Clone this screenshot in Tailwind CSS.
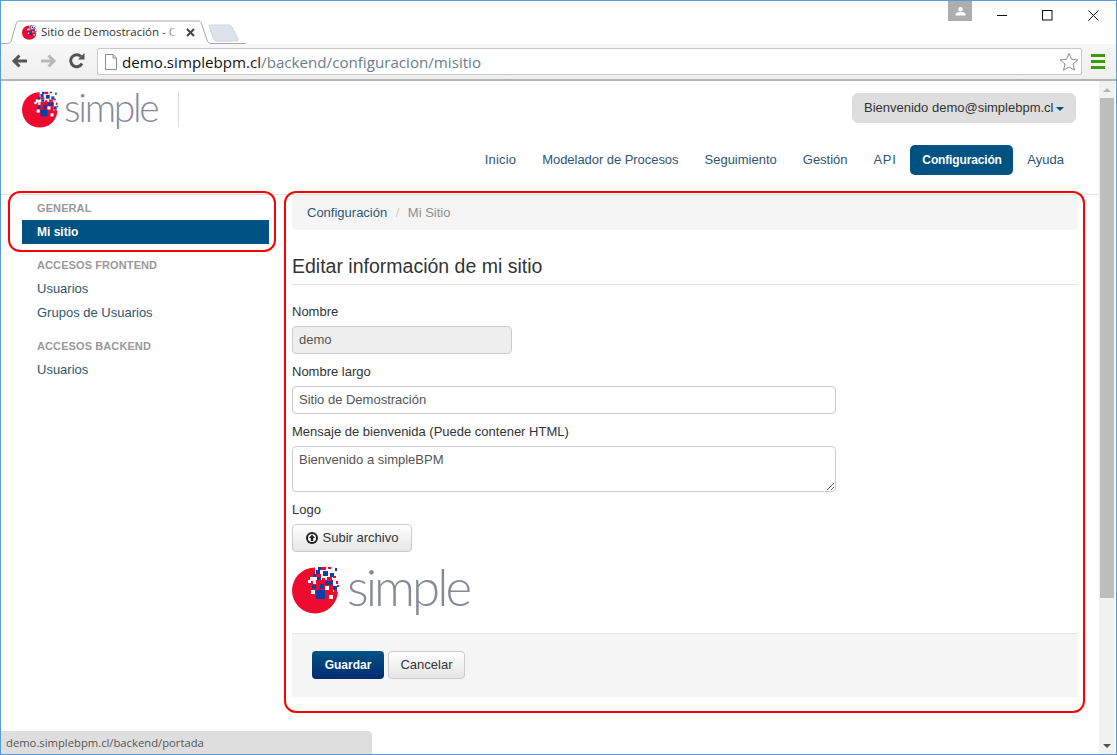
<!DOCTYPE html>
<html lang="es">
<head>
<meta charset="utf-8">
<title>Sitio de Demostración</title>
<script src="https://cdn.jsdelivr.net/npm/@tailwindcss/browser@4"></script>
</head>
<body class="bg-white">
<svg width="0" height="0" class="absolute">
  <defs>
    <symbol id="mark" viewBox="0 0 48 48">
      <circle cx="23" cy="24.500" r="23" fill="#ee0a2f"/>
      <rect x="23" y="0" width="25" height="14" fill="#fff"/>
      <rect x="41" y="14" width="7" height="12" fill="#fff"/>
      <g fill="#ee0a2f">
        <rect x="29" y="1" width="5" height="3"/><rect x="36" y="1" width="3" height="2"/><rect x="41" y="10" width="3" height="2"/><rect x="30" y="12" width="3" height="3"/><rect x="35" y="11" width="5" height="3"/><rect x="44" y="15" width="2" height="3"/><rect x="45" y="19" width="2" height="2"/><rect x="24" y="8" width="5" height="3"/><rect x="42" y="24" width="3" height="5"/>
      </g>
      <g fill="#fff">
        <rect x="18" y="11" width="6" height="4"/><rect x="16" y="14" width="3" height="3"/><rect x="19" y="24" width="4" height="4"/><rect x="37" y="29" width="4" height="4"/><rect x="33" y="20" width="4" height="4"/><rect x="21" y="15" width="3" height="3"/>
      </g>
      <g fill="#0a3fa8">
        <rect x="24" y="24" width="9" height="9"/><rect x="20" y="19" width="4" height="4"/><rect x="28" y="18" width="4" height="5"/><rect x="33" y="15" width="4" height="4"/><rect x="37" y="15" width="4" height="4"/><rect x="41" y="20" width="4" height="4"/><rect x="24" y="4" width="4" height="4"/><rect x="31" y="5" width="5" height="5"/><rect x="38" y="7" width="4" height="4"/><rect x="26" y="1" width="3" height="3"/><rect x="43" y="2" width="2" height="3"/><rect x="21" y="8" width="3" height="3"/><rect x="25" y="11" width="4" height="3"/>
      </g>
    </symbol>
  </defs>
</svg>

<div class="relative w-[1117px] h-[755px] overflow-hidden flex flex-col border border-[#5b9bd5] font-['Liberation_Sans',Arial,sans-serif]">

  <!-- title bar -->
  <div class="relative h-[43px] shrink-0 bg-white">
    <svg class="absolute left-0 top-0" width="245" height="43" viewBox="0 0 245 43">
      <path d="M0 42.500H6.500C9 42.500 10 41 10.500 39L15 23C15.500 21 16.500 20 19 20H197C199 20 200 21 200.600 23L206 39C206.600 41 208 42.500 210 42.500H245" fill="#fff" stroke="#a9a9a9"/>
      <path d="M208 25C207.600 24 208 24 209 24H227C229 24 230 25 231 26L237 38C237.500 39.500 237 40 236 40H216C214 40 213 39 212.500 38Z" fill="#dde3ea" stroke="#cfd5dc"/>
    </svg>
    <svg class="absolute left-[21px] top-[24px]" width="15" height="15"><use href="#mark"/></svg>
    <div class="absolute left-[40px] top-[22px] h-[18px] w-[137px] overflow-hidden whitespace-nowrap text-[11.500px] leading-[18px] text-[#333] font-['Open_Sans',sans-serif]">Sitio de Demostración - C</div>
    <div class="absolute left-[164px] top-[22px] w-[13px] h-[18px] bg-gradient-to-r from-white/0 to-white"></div>
    <svg class="absolute left-[185px] top-[27px]" width="9" height="9" viewBox="0 0 9 9"><path d="M1 1L8 8M8 1L1 8" stroke="#444" stroke-width="2"/></svg>

    <div class="absolute left-[947px] top-0 w-[24px] h-[20px] bg-[#aeaeae] flex items-center justify-center">
      <svg width="11" height="9" viewBox="0 0 11 9"><circle cx="5.500" cy="2.300" r="2.300" fill="#fff"/><path d="M0.500 8.500V7C0.500 5.800 3 5 5.500 5S10.500 5.800 10.500 7V8.500Z" fill="#fff"/></svg>
    </div>
    <svg class="absolute left-[996px] top-[9px]" width="11" height="11" viewBox="0 0 11 11"><path d="M0 5.500H10" stroke="#111"/></svg>
    <svg class="absolute left-[1041px] top-[9px]" width="11" height="11" viewBox="0 0 11 11"><rect x="0.500" y="0.500" width="9.500" height="9.500" fill="none" stroke="#111"/></svg>
    <svg class="absolute left-[1087px] top-[9px]" width="11" height="11" viewBox="0 0 11 11"><path d="M0.500 0.500L10.500 10.500M10.500 0.500L0.500 10.500" stroke="#111"/></svg>
  </div>

  <!-- toolbar -->
  <div class="h-[37px] shrink-0 flex items-center bg-gradient-to-b from-[#f7f7f7] to-[#efefef] border-b-2 border-[#b3b3b3]">
    <div class="w-[96px] shrink-0 relative h-[35px]">
      <svg class="absolute left-[10px] top-[9px]" width="17" height="16" viewBox="0 0 17 16"><path d="M16 8H4M8.500 2.500L3 8L8.500 13.500" fill="none" stroke="#555" stroke-width="3"/></svg>
      <svg class="absolute left-[39px] top-[9px]" width="17" height="16" viewBox="0 0 17 16"><path d="M1 8H13M8.500 2.500L14 8L8.500 13.500" fill="none" stroke="#b8b8b8" stroke-width="3"/></svg>
      <svg class="absolute left-[68px] top-[9px]" width="16" height="16" viewBox="0 0 16 16"><path d="M13 10.500A6 6 0 1 1 12 3.500" fill="none" stroke="#555" stroke-width="3"/><path d="M9 6.500H15.500V0Z" fill="#555"/></svg>
    </div>
    <div class="w-[985px] h-[27px] shrink-0 bg-white border border-[#c8c8c8] rounded-[2px] flex items-center pl-[7px] pr-[2px]">
      <svg class="shrink-0" width="12" height="16" viewBox="0 0 12 16"><path d="M0.500 0.500H8L11.500 4V15.500H0.500Z" fill="#fff" stroke="#8a8a8a"/><path d="M8 0.500V4H11.500" fill="none" stroke="#8a8a8a"/></svg>
      <div class="ml-[5px] flex-1 text-[15.150px] leading-[20px] whitespace-nowrap font-['Open_Sans',sans-serif] text-[#111]">demo.simplebpm.cl<span class="text-[#6d7d8b]">/backend/configuracion/misitio</span></div>
      <svg class="shrink-0" width="20" height="20" viewBox="0 0 20 20"><path d="M10 1.500L12.500 7.300L18.800 7.900L14 12L15.500 18.200L10 15L4.500 18.200L6 12L1.200 7.900L7.500 7.300Z" fill="#fff" stroke="#8c8c8c"/></svg>
    </div>
    <div class="ml-[9px] w-[14px] flex flex-col gap-[3px]">
      <div class="h-[3px] bg-[#3d9c00]"></div><div class="h-[3px] bg-[#3d9c00]"></div><div class="h-[3px] bg-[#3d9c00]"></div>
    </div>
  </div>

  <!-- viewport -->
  <div class="flex-1 flex min-h-0">
    <div class="w-[1098px] shrink-0 flex flex-col">
      <!-- site header -->
      <header class="h-[114px] shrink-0 border-b border-[#e3e3e3] pt-[9px]">
        <div class="flex justify-between items-start pl-[21px] pr-[23px] h-[38px]">
          <div class="flex items-center h-[38px]">
            <svg width="37" height="37"><use href="#mark"/></svg>
            <span class="ml-[5px] w-[95px] text-[39px] leading-[38px] -mt-[5px] font-light tracking-[-2.300px] whitespace-nowrap text-[#858a98] font-['Lato',sans-serif]">simple</span>
            <div class="ml-[19px] w-px h-[36px] bg-[#dcdcdc]"></div>
          </div>
          <div class="mt-[3px] h-[30px] w-[224px] bg-[#dedede] rounded-[6px] flex items-center pl-[12px] text-[13px] whitespace-nowrap text-[#333]">
            <span>Bienvenido demo@simplebpm.cl</span>
            <span class="ml-[2px] mt-[1px] w-0 h-0 border-x-[4px] border-t-[4px] border-x-transparent border-t-[#005282]"></span>
          </div>
        </div>
        <nav class="mt-[17px] flex justify-end gap-[2px] pr-[23px] text-[13px] text-[#2f5573]">
          <a class="h-[30px] px-[12px] flex items-center tracking-[0.200px]">Inicio</a>
          <a class="h-[30px] px-[12px] flex items-center tracking-[-0.050px]">Modelador de Procesos</a>
          <a class="h-[30px] px-[12px] flex items-center">Seguimiento</a>
          <a class="h-[30px] px-[12px] flex items-center">Gestión</a>
          <a class="h-[30px] px-[12px] flex items-center tracking-[0.600px]">API</a>
          <a class="h-[30px] w-[103px] px-[12px] flex items-center bg-[#005282] text-white text-[12px] tracking-[-0.150px] font-bold rounded-[5px]">Configuración</a>
          <a class="h-[30px] px-[12px] flex items-center">Ayuda</a>
        </nav>
      </header>

      <div class="flex-1 flex min-h-0 pl-[21px]">
        <!-- sidebar -->
        <aside class="w-[247px] shrink-0 text-[13px] text-[#2f5573]">
          <div class="pt-[6px] h-[25px] pl-[15px] text-[11px] leading-[14px] font-bold tracking-[0.100px] text-[#999]">GENERAL</div>
          <div class="h-[24px] pl-[15px] text-[12px] leading-[24px] bg-[#005282] text-white font-bold">Mi sitio</div>
          <div class="mt-[14px] h-[14px] pl-[15px] text-[11px] leading-[14px] font-bold tracking-[0.100px] text-[#999]">ACCESOS FRONTEND</div>
          <div class="mt-[4px] h-[24px] pl-[15px] leading-[26px]">Usuarios</div>
          <div class="h-[24px] pl-[15px] leading-[26px]">Grupos de Usuarios</div>
          <div class="mt-[15px] h-[14px] pl-[15px] text-[11px] leading-[14px] font-bold tracking-[0.100px] text-[#999]">ACCESOS BACKEND</div>
          <div class="mt-[4px] h-[24px] pl-[15px] leading-[26px]">Usuarios</div>
        </aside>

        <!-- main -->
        <main class="ml-[23px] w-[786px] shrink-0 text-[13px] text-[#333]">
          <div class="h-[35px] pl-[15px] flex items-center bg-[#f5f5f5] rounded-[4px]">
            <span class="text-[#2f5573]">Configuración</span>
            <span class="mx-[8.500px] text-[#ccc]">/</span>
            <span class="text-[#8f8f8f]">Mi Sitio</span>
          </div>
          <h1 class="mt-[23px] pb-[4px] leading-[27px] text-[19.500px] font-normal border-b border-[#e5e5e5] text-[#333]">Editar información de mi sitio</h1>

          <label class="block mt-[17px] mb-[4px] leading-[20px]">Nombre</label>
          <input readonly value="demo" class="block w-[220px] h-[28px] px-[6px] pb-[2px] text-[13px] text-[#555] bg-[#eee] border border-[#ccc] rounded-[4px]">

          <label class="block mt-[8px] mb-[4px] leading-[20px]">Nombre largo</label>
          <input value="Sitio de Demostración" class="block w-[544px] h-[28px] px-[6px] pb-[2px] text-[13px] text-[#555] bg-white border border-[#ccc] rounded-[4px]">

          <label class="block mt-[8px] mb-[4px] leading-[20px]">Mensaje de bienvenida (Puede contener HTML)</label>
          <textarea class="block w-[544px] h-[46px] px-[6px] py-[4px] text-[13px] leading-[18px] text-[#555] bg-white border border-[#ccc] rounded-[4px]">Bienvenido a simpleBPM</textarea>

          <label class="block mt-[8px] mb-[4px] leading-[20px]">Logo</label>
          <button class="w-[120px] h-[28px] flex items-center justify-center gap-[5px] text-[13px] text-[#333] bg-gradient-to-b from-white to-[#e6e6e6] border border-[#ccc] rounded-[4px]">
            <svg width="12" height="12" viewBox="0 0 12 12"><circle cx="6" cy="6" r="6" fill="#222"/><circle cx="6" cy="6" r="4" fill="#fff"/><path d="M6 2.500L9 6H7.200V9H4.800V6H3Z" fill="#222"/></svg>
            Subir archivo
          </button>

          <div class="mt-[14px] h-[48px] flex items-center">
            <svg width="48" height="48"><use href="#mark"/></svg>
            <span class="ml-[7px] text-[51px] leading-[48px] -mt-[6px] font-light tracking-[-3px] text-[#858a98] font-['Lato',sans-serif]">simple</span>
          </div>

          <div class="mt-[19px] h-[64px] pt-[17px] pl-[20px] flex items-start gap-[4px] bg-[#f5f5f5] border-t border-[#e5e5e5]">
            <button class="w-[72px] h-[28px] text-[12px] font-bold text-white bg-gradient-to-b from-[#005282] to-[#002a72] rounded-[4px]">Guardar</button>
            <button class="w-[77px] h-[28px] text-[13px] text-[#333] bg-gradient-to-b from-white to-[#e6e6e6] border border-[#ccc] rounded-[4px]">Cancelar</button>
          </div>
        </main>
      </div>
    </div>

    <!-- scrollbar -->
    <div class="w-[16px] shrink-0 bg-[#f1f1f1] flex flex-col items-center">
      <div class="h-[17px] flex items-center justify-center"><span class="w-0 h-0 border-x-[4px] border-b-[4px] border-x-transparent border-b-[#b5b5b5]"></span></div>
      <div class="w-[14px] h-[500px] bg-[#bdbdbd]"></div>
      <div class="flex-1 flex items-end pb-[6px]"><span class="w-0 h-0 border-x-[4px] border-t-[4px] border-x-transparent border-t-[#505050]"></span></div>
    </div>
  </div>

  <!-- status bubble -->
  <div class="absolute left-0 bottom-0 w-[371px] h-[23px] pl-[5px] bg-[#dedede] rounded-tr-[4px] text-[11.250px] leading-[24px] text-[#555] font-['Open_Sans',sans-serif]">demo.simplebpm.cl/backend/portada</div>

  <!-- annotation outlines -->
  <div class="absolute left-[7px] top-[190px] w-[268px] h-[61px] border-2 border-[#f00] rounded-[12px] pointer-events-none"></div>
  <div class="absolute left-[283px] top-[190px] w-[801px] h-[522px] border-2 border-[#f00] rounded-[12px] pointer-events-none"></div>
</div>
</body>
</html>
